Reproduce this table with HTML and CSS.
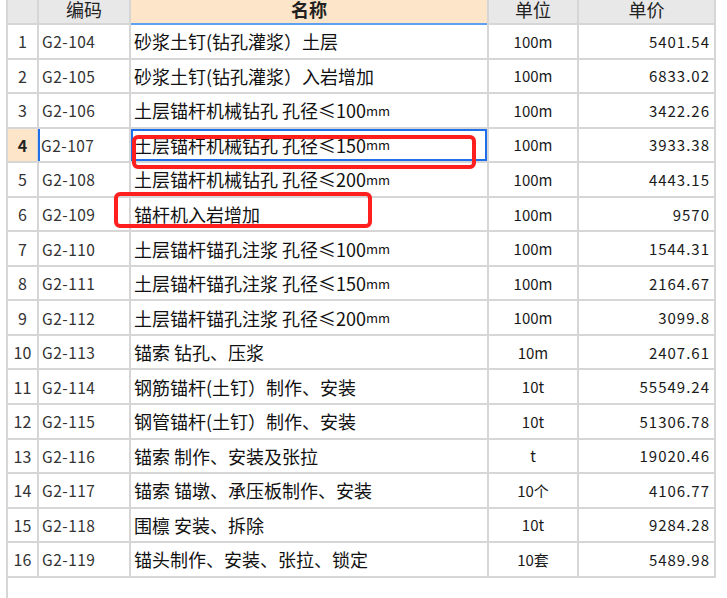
FILE: index.html
```html
<!DOCTYPE html>
<html lang="zh-CN">
<head>
<meta charset="utf-8">
<title>定额列表</title>
<link rel="stylesheet" href="styles.css">
</head>
<body>
<div class="page">
  <div class="sheet">
    <div class="h"><span></span></div>
    <div class="h"><span>编码</span></div>
    <div class="h h-sel"><span class="b">名称</span></div>
    <div class="h"><span>单位</span></div>
    <div class="h"><span>单价</span></div>

    <div class="c num">1</div><div class="c code">G2-104</div><div class="c name">砂浆土钉(钻孔灌浆）土层</div><div class="c unit">100m</div><div class="c price">5401.54</div>
    <div class="c num">2</div><div class="c code">G2-105</div><div class="c name">砂浆土钉(钻孔灌浆）入岩增加</div><div class="c unit">100m</div><div class="c price">6833.02</div>
    <div class="c num">3</div><div class="c code">G2-106</div><div class="c name">土层锚杆机械钻孔 孔径≤100<span class="mm">mm</span></div><div class="c unit">100m</div><div class="c price">3422.26</div>
    <div class="c num num-sel">4</div><div class="c code code-sel">G2-107</div><div class="c name name-sel">土层锚杆机械钻孔 孔径≤150<span class="mm">mm</span></div><div class="c unit">100m</div><div class="c price">3933.38</div>
    <div class="c num">5</div><div class="c code">G2-108</div><div class="c name">土层锚杆机械钻孔 孔径≤200<span class="mm">mm</span></div><div class="c unit">100m</div><div class="c price">4443.15</div>
    <div class="c num">6</div><div class="c code">G2-109</div><div class="c name">锚杆机入岩增加</div><div class="c unit">100m</div><div class="c price">9570</div>
    <div class="c num">7</div><div class="c code">G2-110</div><div class="c name">土层锚杆锚孔注浆 孔径≤100<span class="mm">mm</span></div><div class="c unit">100m</div><div class="c price">1544.31</div>
    <div class="c num">8</div><div class="c code">G2-111</div><div class="c name">土层锚杆锚孔注浆 孔径≤150<span class="mm">mm</span></div><div class="c unit">100m</div><div class="c price">2164.67</div>
    <div class="c num">9</div><div class="c code">G2-112</div><div class="c name">土层锚杆锚孔注浆 孔径≤200<span class="mm">mm</span></div><div class="c unit">100m</div><div class="c price">3099.8</div>
    <div class="c num">10</div><div class="c code">G2-113</div><div class="c name">锚索 钻孔、压浆</div><div class="c unit">10m</div><div class="c price">2407.61</div>
    <div class="c num">11</div><div class="c code">G2-114</div><div class="c name">钢筋锚杆(土钉）制作、安装</div><div class="c unit">10t</div><div class="c price">55549.24</div>
    <div class="c num">12</div><div class="c code">G2-115</div><div class="c name">钢管锚杆(土钉）制作、安装</div><div class="c unit">10t</div><div class="c price">51306.78</div>
    <div class="c num">13</div><div class="c code">G2-116</div><div class="c name">锚索 制作、安装及张拉</div><div class="c unit">t</div><div class="c price">19020.46</div>
    <div class="c num">14</div><div class="c code">G2-117</div><div class="c name">锚索 锚墩、承压板制作、安装</div><div class="c unit">10个</div><div class="c price">4106.77</div>
    <div class="c num">15</div><div class="c code">G2-118</div><div class="c name">围檩 安装、拆除</div><div class="c unit">10t</div><div class="c price">9284.28</div>
    <div class="c num">16</div><div class="c code">G2-119</div><div class="c name">锚头制作、安装、张拉、锁定</div><div class="c unit">10套</div><div class="c price">5489.98</div>
  </div>
  <div class="tail"></div>

  <div class="mark m1"></div>
  <div class="mark m2"></div>
</div>
</body>
</html>
```

FILE: styles.css
```css
html, body {
  margin: 0;
  padding: 0;
  background: #ffffff;
}

body {
  font-family: "Noto Sans CJK SC", "Noto Sans", sans-serif;
  color: #1a1a1a;
  width: 727px;
  height: 598px;
  overflow: hidden;
}

.page {
  position: relative;
  width: 727px;
  height: 598px;
}

.sheet {
  margin-left: 6px;
  width: 710px;
  box-sizing: border-box;
  display: grid;
  grid-template-columns: 29px 90px 356px 88px 135px;
  grid-template-rows: 23px;
  grid-auto-rows: 32.56px;
  gap: 2px;
  padding: 0 2px 2px 2px;
  background: #d6d6d6;
}

.h {
  background: #e8e8e8;
  display: flex;
  align-items: flex-end;
  justify-content: center;
  overflow: hidden;
  font-size: 18px;
  line-height: 18px;
  padding-bottom: 5px;
  box-sizing: border-box;
  color: #222;
}

.h-sel {
  background: #fde5c9;
  box-shadow: 0 2px 0 #5e9ff2;
}

.b {
  font-weight: bold;
}

.c {
  background: #ffffff;
  display: flex;
  align-items: center;
  font-size: 17px;
  white-space: nowrap;
  box-sizing: border-box;
}

.num {
  justify-content: center;
  font-size: 16px;
  color: #333;
}

.num-sel {
  background: #fde5c9;
  font-weight: bold;
  color: #222;
}

.code {
  padding-left: 3px;
  font-size: 15.5px;
  letter-spacing: 0.5px;
  color: #333;
}

.code-sel {
  box-shadow: inset 2px 0 0 #1f6fea;
  margin-left: -1px;
}

.name {
  padding-left: 3px;
  font-size: 18px;
  color: #111;
}

.name-sel {
  box-shadow: inset 0 0 0 2px #1f6fea;
}

.mm {
  font-size: 13px;
}

.unit {
  justify-content: center;
  font-size: 15px;
}

.price {
  justify-content: flex-end;
  padding-right: 4px;
  font-size: 15px;
  letter-spacing: 1px;
}

.tail {
  margin-left: 6px;
  height: 30px;
  border-left: 2px solid #d6d6d6;
}

.mark {
  position: absolute;
  border: 4px solid #ff1f1f;
  border-radius: 6px;
  box-sizing: border-box;
}

.m1 {
  left: 132px;
  top: 135px;
  width: 344px;
  height: 34px;
}

.m2 {
  left: 114px;
  top: 192px;
  width: 258px;
  height: 36px;
}
```
